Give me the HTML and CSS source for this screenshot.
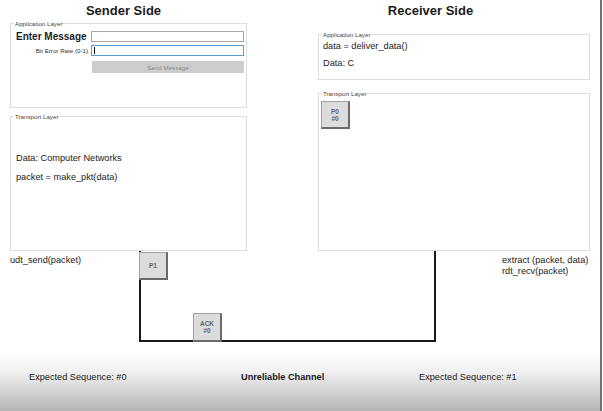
FILE: index.html
```html
<!DOCTYPE html>
<html lang="en">
<head>
  <meta charset="UTF-8" />
  <meta name="viewport" content="width=device-width, initial-scale=1.0"/>
  <title>RDT 3.0 Simulator</title>
  <link rel="stylesheet" href="styles.css">
</head>
<body>
  <div class="window">
    <div class="sides">
      <section class="side sender">
        <h2>Sender Side</h2>
        <div class="group send-app">
          <span class="group-title">Application Layer</span>
          <div class="form">
            <label class="lbl-big" for="msg">Enter Message</label>
            <input class="field" type="text" id="msg" />
            <label class="lbl-small" for="ber">Bit Error Rate (0-1)</label>
            <input class="field focus" type="text" id="ber" />
            <button class="send-btn">Send Message</button>
          </div>
        </div>
        <div class="group send-transport">
          <span class="group-title">Transport Layer</span>
          <p class="line">Data: Computer Networks</p>
          <p class="line">packet = make_pkt(data)</p>
        </div>
      </section>

      <section class="side receiver">
        <h2>Receiver Side</h2>
        <div class="group recv-app">
          <span class="group-title">Application Layer</span>
          <p class="line">data = deliver_data()</p>
          <p class="line">Data: C</p>
        </div>
        <div class="group recv-transport">
          <span class="group-title">Transport Layer</span>
          <div class="packet">P0<br>#0</div>
        </div>
      </section>
    </div>

    <div class="channel-row">
      <div class="caption caption-left">udt_send(packet)</div>
      <div class="channel">
        <div class="packet pkt-p1">P1</div>
        <div class="packet pkt-ack">ACK<br>#0</div>
      </div>
      <div class="caption caption-right">extract (packet, data)<br>rdt_recv(packet)</div>
    </div>

    <div class="footer">
      <span>Expected Sequence: #0</span>
      <strong>Unreliable Channel</strong>
      <span>Expected Sequence: #1</span>
    </div>
  </div>
</body>
</html>
```

FILE: styles.css
```css
* {
  box-sizing: border-box;
}
body {
  margin: 0;
  font-family: "Liberation Sans", Arial, sans-serif;
  color: #1b1b1b;
  background: #fff;
}
.window {
  width: 602px;
  height: 411px;
  border-right: 2px solid #727272;
  display: flex;
  flex-direction: column;
  overflow: hidden;
}
.sides {
  display: grid;
  grid-template-columns: 247px 1fr;
}
h2 {
  margin: 0;
  height: 22px;
  line-height: 22px;
  font-size: 13px;
  text-align: center;
}
.receiver {
  padding-left: 14px;
}
.group {
  position: relative;
  border: 1px solid #dedede;
}
.group-title {
  position: absolute;
  top: -4px;
  left: 3px;
  padding: 0 1px;
  background: #fff;
  font-size: 6.2px;
  line-height: 7px;
  color: #444;
}
.sender .group {
  margin-left: 10px;
  width: 237px;
}
.receiver .group {
  margin-left: 57px;
  width: 272px;
}
.line {
  margin: 0;
  font-size: 9.2px;
  line-height: 11px;
}

/* sender */
.send-app {
  margin-top: 1px;
  height: 85px;
  padding: 7px 0 0 5px;
}
.form {
  display: grid;
  grid-template-columns: 75px 153px;
  grid-auto-rows: 11px;
  row-gap: 3px;
}
.lbl-big {
  font-size: 10px;
  font-weight: bold;
  line-height: 11px;
}
.lbl-small {
  font-size: 6.2px;
  line-height: 11px;
  text-align: right;
  padding-right: 3px;
  color: #333;
}
.field {
  width: 100%;
  height: 11px;
  margin: 0;
  padding: 0;
  border: 1px solid #a8a8a8;
  font: inherit;
  outline: none;
}
.field.focus {
  border-color: #5a9ad6;
  background: linear-gradient(#111, #111) no-repeat 2px 1px / 1px 7px, #fff;
}
.send-btn {
  grid-column: 2;
  height: 12px;
  margin: 2px 0 0 1px;
  padding: 0;
  border: none;
  background: #cccccc;
  color: #8a8a8a;
  font-family: inherit;
  font-size: 6.2px;
}
.send-transport {
  margin-top: 8px;
  height: 135px;
  padding: 36px 0 0 5px;
}
.send-transport .line + .line {
  margin-top: 8px;
}

/* receiver */
.recv-app {
  margin-top: 12px;
  height: 46px;
  padding: 6px 0 0 4px;
}
.recv-app .line + .line {
  margin-top: 6px;
}
.recv-transport {
  margin-top: 13px;
  height: 158px;
  padding: 7px 0 0 2px;
}

/* packets */
.packet {
  width: 29px;
  height: 28px;
  display: flex;
  align-items: center;
  justify-content: center;
  text-align: center;
  background: #dcdcdc;
  border: 1px solid #a2a2a2;
  border-right: 2px solid #6a6a6a;
  border-bottom: 2px solid #6a6a6a;
  font-size: 6.5px;
  font-weight: bold;
  line-height: 7px;
  color: #666;
}

/* channel */
.channel-row {
  display: flex;
  height: 91px;
}
.caption {
  font-size: 9.2px;
  line-height: 11px;
  padding-top: 4px;
}
.caption-left {
  margin-left: 10px;
  width: 129px;
}
.channel {
  position: relative;
  width: 297px;
  height: 91px;
  border: 2px solid #1a1a1a;
  border-top: none;
}
.pkt-p1 {
  position: absolute;
  left: -2px;
  top: 1px;
}
.pkt-ack {
  position: absolute;
  left: 52px;
  top: 62px;
  height: 29px;
}
.caption-right {
  margin-left: 66px;
}

/* footer */
.footer {
  flex: 1;
  display: grid;
  grid-template-columns: 212px 178px 1fr;
  padding: 30px 0 0 29px;
  font-size: 9.2px;
  line-height: 11px;
  background: linear-gradient(#fff 11px, #efefef 45%, #b4b4b4 100%);
}
```
